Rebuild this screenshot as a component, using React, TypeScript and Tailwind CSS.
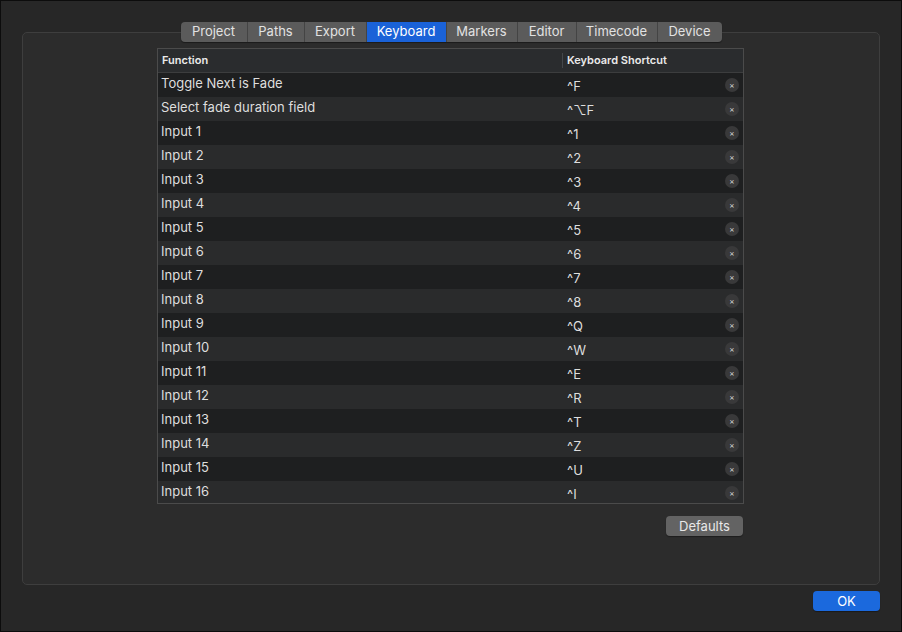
const TABS = [
  { label: "Project", w: 66 },
  { label: "Paths", w: 57 },
  { label: "Export", w: 62 },
  { label: "Keyboard", w: 80 },
  { label: "Markers", w: 71 },
  { label: "Editor", w: 59 },
  { label: "Timecode", w: 81 },
  { label: "Device", w: 65 },
];

const SHORTCUTS: [string, string][] = [
  ["Toggle Next is Fade", "^F"],
  ["Select fade duration field", "^⌥F"],
  ["Input 1", "^1"],
  ["Input 2", "^2"],
  ["Input 3", "^3"],
  ["Input 4", "^4"],
  ["Input 5", "^5"],
  ["Input 6", "^6"],
  ["Input 7", "^7"],
  ["Input 8", "^8"],
  ["Input 9", "^Q"],
  ["Input 10", "^W"],
  ["Input 11", "^E"],
  ["Input 12", "^R"],
  ["Input 13", "^T"],
  ["Input 14", "^Z"],
  ["Input 15", "^U"],
  ["Input 16", "^I"],
];

export default function App() {
  return (
    <div
      className="flex h-[632px] w-[902px] flex-col border border-[#0c0c0c] bg-[#272727] text-[13px] text-[#dedede]"
      style={{ fontFamily: "Inter, 'Noto Sans', sans-serif" }}
    >
      <div className="relative z-10 mt-[21px] flex justify-center">
        <TabBar active="Keyboard" />
      </div>

      <section className="mx-[21px] -mt-[10px] flex h-[553px] flex-col rounded-[5px] border border-[#3e3e3e] bg-[#2c2c2c] pl-[134px] pt-[15px]">
        <ShortcutTable />
        <div className="flex w-[586px] justify-end pt-[12px]">
          <button className="h-[20px] w-[77px] rounded-[4px] bg-[#636363] text-[13px] leading-[20px] text-[#e8e8e8] shadow-[0_1px_1px_rgba(0,0,0,0.35)]">
            Defaults
          </button>
        </div>
      </section>

      <div className="flex justify-end pr-[21px] pt-[6px]">
        <button className="h-[20px] w-[67px] rounded-[4px] bg-[#1b69dd] text-[13px] leading-[20px] text-white shadow-[0_1px_1px_rgba(0,0,0,0.35)]">
          OK
        </button>
      </div>
    </div>
  );
}

function TabBar({ active }: { active: string }) {
  return (
    <div className="flex h-[20px] overflow-hidden rounded-[4px] bg-[#5b5b5b] shadow-[0_1px_1px_rgba(0,0,0,0.4)]">
      {TABS.map((tab, i) => (
        <div
          key={tab.label}
          style={{ width: tab.w }}
          className={
            "flex items-center justify-center pb-px text-[13px] leading-none " +
            (tab.label === active ? "bg-[#1a62d8] text-white " : "text-[#e2e2e2] ") +
            (i > 0 ? "border-l border-[#444444]" : "")
          }
        >
          {tab.label}
        </div>
      ))}
    </div>
  );
}

function ShortcutTable() {
  return (
    <div className="h-[456px] w-[587px] overflow-hidden border border-[#4b4b4b] bg-[#1e1f20]">
      <div className="flex h-[24px] border-b border-[#3c3d3e] bg-[#2a2c2e] text-[11px] font-semibold text-[#eaeaea]">
        <div className="flex w-[404px] items-center pl-[4px]">Function</div>
        <div className="my-[4px] w-px bg-[#44474a]" />
        <div className="flex flex-1 items-center pl-[4px]">Keyboard Shortcut</div>
      </div>
      {SHORTCUTS.map(([name, keys], i) => (
        <div key={name} className={"flex h-[24px] " + (i % 2 === 0 ? "bg-[#1e1f20]" : "bg-[#2a2b2c]")}>
          <div className="w-[405px] pl-[3px] pt-[2px] leading-[16px]">{name}</div>
          <div className="flex-1 pl-[4px] pt-[5px] leading-[16px]">{keys}</div>
          <div className="flex items-center pr-[4px]">
            <span className="flex h-[14px] w-[14px] items-center justify-center rounded-full bg-[#39393a] text-[8px] leading-none text-[#d8d8d8]">
              ×
            </span>
          </div>
        </div>
      ))}
    </div>
  );
}
